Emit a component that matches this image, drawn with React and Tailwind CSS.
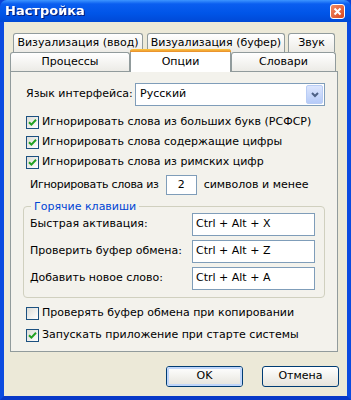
import React from "react";

function Check({ checked }) {
  return (
    <span className="w-[13px] h-[13px] border border-[#1c5180] bg-linear-to-br from-[#dcdcd7] to-white flex items-center justify-center shrink-0">
      {checked && (
        <svg width="9" height="9" viewBox="0 0 9 9">
          <path d="M1 4.2 L3.4 6.6 L8 1.8" stroke="#21a121" strokeWidth="2" fill="none" />
        </svg>
      )}
    </span>
  );
}

function CheckRow({ checked, children }) {
  return (
    <div className="flex items-center h-[20px] gap-[3px]">
      <Check checked={checked} />
      <span className="whitespace-nowrap">{children}</span>
    </div>
  );
}

function Tab({ w, ml = 0, children }) {
  return (
    <div
      className="h-[19px] shrink-0 border border-b-0 border-[#919b9c] rounded-t-[3px] bg-linear-to-b from-white to-[#ecebe6] flex items-center justify-center whitespace-nowrap"
      style={{ width: w, marginLeft: ml }}
    >
      {children}
    </div>
  );
}

function HotkeyRow({ label, value }) {
  return (
    <div className="flex items-center h-[23px]">
      <span className="w-[162px] shrink-0 whitespace-nowrap">{label}</span>
      <div className="w-[123px] h-[23px] border border-[#7f9db9] bg-white flex items-center px-[3px]">{value}</div>
    </div>
  );
}

function Button({ primary, children }) {
  return (
    <div className="w-[77px] h-[21px] rounded-[3px] border border-[#003c74] bg-linear-to-b from-white to-[#e6e4dc] flex items-center justify-center">
      <div className={`w-full h-full rounded-[2px] flex items-center justify-center ${primary ? "border-2 border-[#c0d6fa]" : ""}`}>{children}</div>
    </div>
  );
}

export default function App() {
  return (
    <div className="w-[351px] h-[400px] flex flex-col font-['DejaVu_Sans',sans-serif] text-[11px] text-black bg-[#0842d8]">
      <div className="h-[22px] shrink-0 rounded-t-[7px] bg-[linear-gradient(to_bottom,#3d95ff_0%,#0a5ef0_18%,#0055e8_60%,#0049d6_100%)] flex items-center justify-between pl-[5px] pr-[6px]">
        <span className="text-white font-bold text-[13px] font-['DejaVu_Sans',sans-serif] drop-shadow-[1px_1px_0_#0a1f7a]">Настройка</span>
        <div className="w-[15px] h-[15px] rounded-[3px] border border-white bg-linear-to-br from-[#f08a62] to-[#d8431a] flex items-center justify-center">
          <svg width="9" height="9" viewBox="0 0 9 9">
            <path d="M1.5 1.5 L7.5 7.5 M7.5 1.5 L1.5 7.5" stroke="white" strokeWidth="2" />
          </svg>
        </div>
      </div>
      <div className="flex-1 border-x-4 border-b-4 border-x-[#0b4be0] border-b-[#0838c8] bg-[#ece9d8] flex flex-col pt-[11px] pl-[6px] pr-[9px]">
        <div className="flex">
          <Tab w={130} ml={3}>Визуализация (ввод)</Tab>
          <Tab w={138} ml={4}>Визуализация (буфер)</Tab>
          <Tab w={47} ml={3}>Звук</Tab>
        </div>
        <div className="flex items-end h-[19px]">
          <Tab w={120}>Процессы</Tab>
          <div className="w-[101px] h-[23px] -mb-[1px] relative z-10 shrink-0 bg-white border-x border-[#919b9c] rounded-t-[3px] flex flex-col">
            <div className="h-[3px] rounded-t-[3px] bg-linear-to-b from-[#ffc83c] to-[#e68b2c] -mx-[1px]" />
            <div className="flex-1 flex items-center justify-center">Опции</div>
          </div>
          <Tab w={105}>Словари</Tab>
        </div>
        <div className="w-[328px] h-[281px] border border-[#919b9c] bg-[#f3f2ec] pt-[11px] pl-[15px] flex flex-col">
          <div className="flex items-center h-[23px]">
            <span className="w-[109px] shrink-0 whitespace-nowrap">Язык интерфейса:</span>
            <div className="w-[190px] h-[23px] border border-[#7f9db9] bg-white flex items-center pl-[4px] pr-[1px]">
              <span className="flex-1">Русский</span>
              <div className="w-[17px] h-[19px] rounded-[2px] border border-[#b9cdf5] bg-linear-to-b from-[#dce6fd] to-[#b6cbf8] flex items-center justify-center">
                <svg width="8" height="6" viewBox="0 0 8 6">
                  <path d="M1 1 L4 4 L7 1" stroke="#4d6185" strokeWidth="2" fill="none" />
                </svg>
              </div>
            </div>
          </div>
          <div className="mt-[6px] flex flex-col">
            <CheckRow checked>Игнорировать слова из больших букв (РСФСР)</CheckRow>
            <CheckRow checked>Игнорировать слова содержащие цифры</CheckRow>
            <CheckRow checked>Игнорировать слова из римских цифр</CheckRow>
          </div>
          <div className="mt-[3px] flex items-center h-[20px] pl-[4px]">
            <span className="whitespace-nowrap tracking-[-0.3px]">Игнорировать слова из</span>
            <div className="ml-[7px] w-[31px] h-[20px] border border-[#7f9db9] bg-white flex items-center justify-center">2</div>
            <span className="ml-[7px] whitespace-nowrap">символов и менее</span>
          </div>
          <div className="mt-[11px] -ml-[3px] w-[302px] h-[92px] border border-[#d0d0bf] rounded-[4px] relative pt-[6px] pl-[6px] flex flex-col gap-[4px]">
            <span className="absolute -top-[8px] left-[7px] px-[3px] bg-[#f3f2ec] text-[#0046d5] whitespace-nowrap">Горячие клавиши</span>
            <HotkeyRow label="Быстрая активация:" value="Ctrl + Alt + X" />
            <HotkeyRow label="Проверить буфер обмена:" value="Ctrl + Alt + Z" />
            <HotkeyRow label="Добавить новое слово:" value="Ctrl + Alt + A" />
          </div>
          <div className="mt-[5px] flex flex-col gap-[2px]">
            <CheckRow>Проверять буфер обмена при копировании</CheckRow>
            <CheckRow checked>Запускать приложение при старте системы</CheckRow>
          </div>
        </div>
        <div className="mt-[14px] flex justify-end gap-[19px] -mr-[1px]">
          <Button primary>OK</Button>
          <Button>Отмена</Button>
        </div>
      </div>
    </div>
  );
}
